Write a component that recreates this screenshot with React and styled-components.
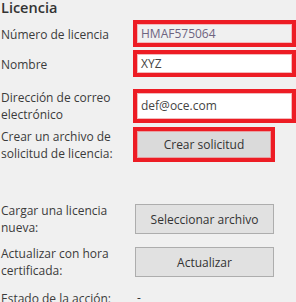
import React from "react";
import styled, { createGlobalStyle } from "styled-components";

const GlobalStyle = createGlobalStyle`
  html, body {
    margin: 0;
    padding: 0;
    background: #f0f0f0;
  }
  body {
    font-family: "Open Sans", "Noto Sans", sans-serif;
    font-size: 12px;
    color: #3b3b3b;
  }
`;

const rows = [
  { label: "Número de licencia", kind: "input", value: "HMAF575064", disabled: true, height: 27, top: 4 },
  { label: "Nombre", kind: "input", value: "XYZ", height: 27, top: 3 },
  { label: ["Dirección de correo", "electrónico"], kind: "input", value: "def@oce.com", height: 28, top: 12 },
  { label: ["Crear un archivo de", "solicitud de licencia:"], kind: "highlightButton", value: "Crear solicitud", height: 35, top: 10 },
  { label: ["Cargar una licencia", "nueva:"], kind: "button", value: "Seleccionar archivo", height: 32, top: 40 },
  { label: ["Actualizar con hora", "certificada:"], kind: "button", value: "Actualizar", height: 32, top: 11 },
  { label: "Estado de la acción:", kind: "status", value: "-", height: 16, top: 11 },
];

const App = () => {
  return (
    <>
      <GlobalStyle />
      <Panel>
        <Title>Licencia</Title>
        {rows.map((row, i) => (
          <Row key={i} $height={row.height} $top={row.top}>
            <Label $single={!Array.isArray(row.label)}>
              {Array.isArray(row.label)
                ? row.label.map((line, j) => <span key={j}>{line}</span>)
                : row.label}
            </Label>
            {row.kind === "input" && (
              <Highlight>
                <Field $disabled={row.disabled}>{row.value}</Field>
              </Highlight>
            )}
            {row.kind === "highlightButton" && (
              <Highlight $button>
                <Button $flat>{row.value}</Button>
              </Highlight>
            )}
            {row.kind === "button" && <Button>{row.value}</Button>}
            {row.kind === "status" && <Status>{row.value}</Status>}
          </Row>
        ))}
      </Panel>
    </>
  );
};

const Panel = styled.div`
  width: 296px;
  height: 302px;
  overflow: hidden;
  display: flex;
  flex-direction: column;
`;

const Title = styled.h1`
  margin: 0;
  height: 16px;
  flex-shrink: 0;
  font-size: 14.5px;
  font-weight: 600;
  line-height: 16px;
  color: #333333;
  padding-left: 1px;
`;

const Row = styled.div`
  display: grid;
  grid-template-columns: 133px 1fr;
  align-items: center;
  height: ${(p) => p.$height}px;
  margin-top: ${(p) => p.$top}px;
  flex-shrink: 0;
`;

const Label = styled.div`
  display: flex;
  flex-direction: column;
  line-height: 17px;
  padding-left: 1px;
  padding-top: ${(p) => (p.$single ? "2px" : "0")};
  white-space: nowrap;
`;

const Highlight = styled.div`
  box-sizing: border-box;
  border: 4px solid #ed1c24;
  height: 100%;
  width: ${(p) => (p.$button ? "142px" : "163px")};
  display: flex;
`;

const Field = styled.div`
  flex: 1;
  box-sizing: border-box;
  border: 1px solid #f3b9bb;
  background: ${(p) => (p.$disabled ? "#f0f0f0" : "#ffffff")};
  color: ${(p) => (p.$disabled ? "#6e6480" : "#444444")};
  padding: 0 3px;
  display: flex;
  align-items: center;
  line-height: 1;
`;

const Button = styled.div`
  box-sizing: border-box;
  width: ${(p) => (p.$flat ? "auto" : "139px")};
  flex: ${(p) => (p.$flat ? 1 : "none")};
  height: ${(p) => (p.$flat ? "100%" : "30px")};
  margin-left: ${(p) => (p.$flat ? 0 : "2px")};
  background: ${(p) => (p.$flat ? "#dadada" : "#e1e1e1")};
  border: 1px solid ${(p) => (p.$flat ? "#e7a0a3" : "#adadad")};
  color: #333333;
  display: flex;
  align-items: center;
  justify-content: center;
  font-size: 12px;
`;

const Status = styled.div`
  padding-left: 4px;
  color: #333333;
`;

export default App;
